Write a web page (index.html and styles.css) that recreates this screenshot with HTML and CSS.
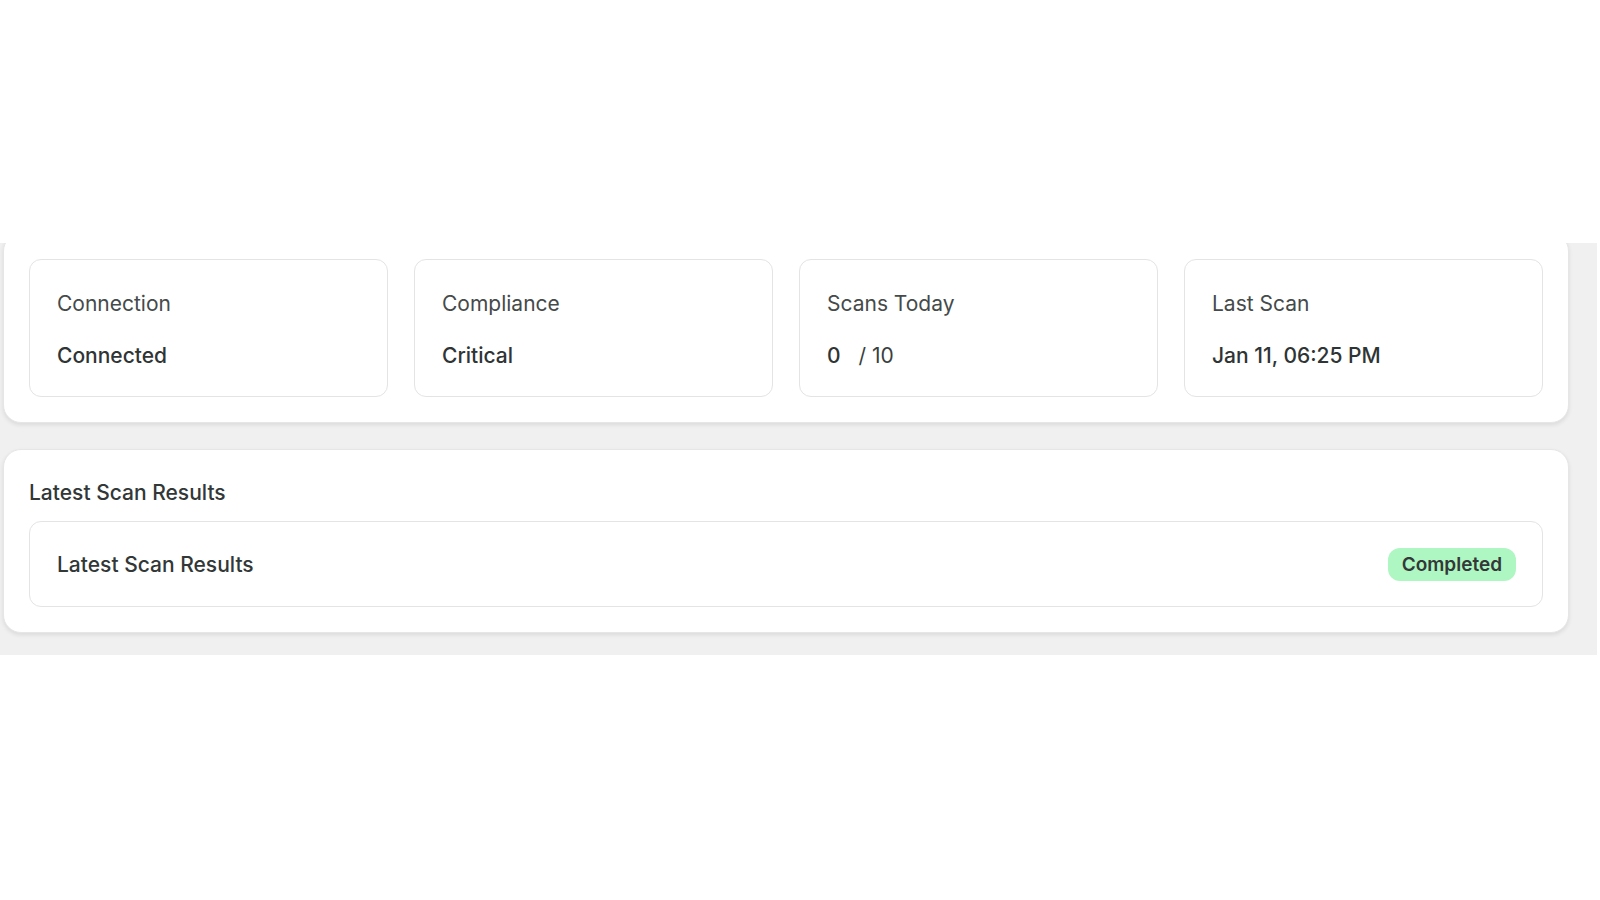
FILE: index.html
```html
<!DOCTYPE html>
<html lang="en">
<head>
<meta charset="utf-8">
<title>Scan Dashboard</title>
<link rel="stylesheet" href="styles.css">
</head>
<body>
<div class="top-space"></div>
<div class="viewport">
  <div class="content">
    <section class="panel panel-stats">
      <div class="stats">
        <div class="stat">
          <div class="stat-label">Connection</div>
          <div class="stat-value">Connected</div>
        </div>
        <div class="stat">
          <div class="stat-label">Compliance</div>
          <div class="stat-value">Critical</div>
        </div>
        <div class="stat">
          <div class="stat-label">Scans Today</div>
          <div class="stat-value"><span>0</span><span class="stat-of">/ 10</span></div>
        </div>
        <div class="stat">
          <div class="stat-label">Last Scan</div>
          <div class="stat-value">Jan 11, 06:25 PM</div>
        </div>
      </div>
    </section>
    <section class="panel panel-results">
      <h2 class="panel-title">Latest Scan Results</h2>
      <div class="result-row">
        <div class="result-name">Latest Scan Results</div>
        <span class="badge">Completed</span>
      </div>
    </section>
  </div>
</div>
</body>
</html>
```
FILE: styles.css
```css
* { box-sizing: border-box; }
html, body {
  margin: 0;
  padding: 0;
  background: #ffffff;
  font-family: Inter, "Noto Sans", "Liberation Sans", sans-serif;
  color: #323737;
}
.top-space { height: 243px; }
.viewport {
  height: 412px;
  overflow: hidden;
  background: #f0f0f0;
  padding: 0 28px 0 3px;
  margin-right: 3px;
}
.content {
  display: flex;
  flex-direction: column;
  gap: 26px;
  margin-top: -10px;
}
.panel {
  background: #ffffff;
  border: 1px solid #e6e6e6;
  border-radius: 18px;
  box-shadow: 0 2px 4px rgba(0, 0, 0, 0.09);
  padding: 25px;
}
.stats {
  display: grid;
  grid-template-columns: repeat(4, 1fr);
  gap: 26px;
}
.stat {
  border: 1px solid #e4e4e4;
  border-radius: 12px;
  padding: 30px 26px 26px 27px;
}
.stat-label {
  font-size: 21px;
  line-height: 28px;
  color: #454a4a;
  margin-bottom: 24px;
}
.stat-value {
  font-size: 21px;
  line-height: 28px;
  font-weight: 500;
  color: #2f3434;
}
.stat-of {
  font-weight: 400;
  margin-left: 18px;
  color: #3a3f3f;
}
.panel-results { padding-top: 29px; }
.panel-title {
  margin: 0 0 14px;
  font-size: 21px;
  line-height: 28px;
  font-weight: 500;
  color: #323737;
}
.result-row {
  display: flex;
  align-items: center;
  justify-content: space-between;
  border: 1px solid #e4e4e4;
  border-radius: 12px;
  padding: 26px 26px 25px 27px;
}
.result-name {
  font-size: 21px;
  line-height: 28px;
  font-weight: 500;
  color: #323737;
}
.badge {
  display: inline-flex;
  align-items: center;
  height: 33px;
  padding: 0 14px;
  border-radius: 12px;
  background: #aef7c2;
  color: #343838;
  font-size: 19px;
  font-weight: 600;
}
```
